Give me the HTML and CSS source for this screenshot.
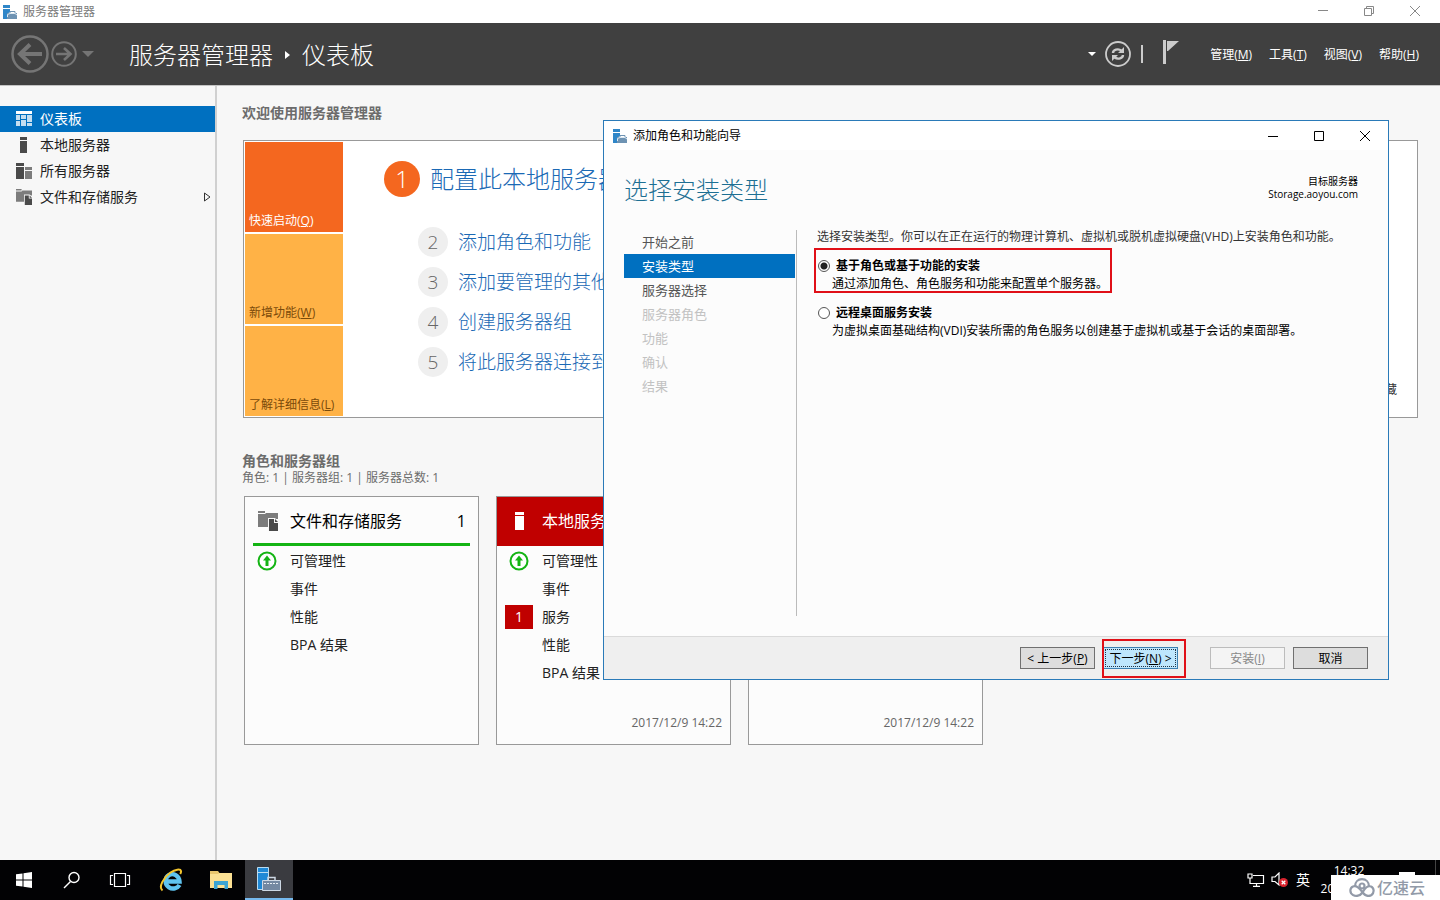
FILE: index.html
```html
<!DOCTYPE html>
<html lang="zh-CN">
<head>
<meta charset="utf-8">
<title>服务器管理器</title>
<link rel="stylesheet" href="styles.css">
</head>
<body>
<svg class="defs" aria-hidden="true">
  <symbol id="app" viewBox="0 0 14 14"><path fill="#2f86c8" d="M0 0h7v3H0zM0 4h7v3L4 9v5H0z"/><path fill="#6e93b3" d="M4 8h10v6H4z"/><path fill="none" stroke="#6e93b3" d="M7 8V6.500h5V8"/><path fill="none" stroke="#dbe8f2" d="M4.500 12V9.500L7 8.500h5l2 1.500"/></symbol>
  <symbol id="folder" viewBox="0 0 20 20"><path fill="#7c7c7c" d="M0 0h7v2H0zM0 3h7l1-1h12v6h-9v8H0z"/><path fill="#f7f7f7" d="M10 7h7l3 3v10H10z"/><path fill="#4a4a4a" d="M11 8h5v4h4v8h-9z"/><path fill="#4a4a4a" d="M17 8l3 3h-3z"/></symbol>
  <symbol id="up" viewBox="0 0 20 20"><circle cx="10" cy="10" r="8.500" fill="#fff" stroke="#14b414" stroke-width="2"/><path fill="#14b414" d="M10 4.500l4 5h-2.500V15h-3V9.500H6z"/></symbol>
</svg>

<header class="titlebar">
  <svg class="i14"><use href="#app"/></svg>
  <span class="titlebar-text">服务器管理器</span>
  <div class="winbtns gray">
    <button aria-label="最小化"><svg viewBox="0 0 12 12"><path d="M1 5.500h10"/></svg></button>
    <button aria-label="还原"><svg viewBox="0 0 12 12"><path d="M1.500 3.500h7v7h-7zM3.500 3V1.500h7v7H9"/></svg></button>
    <button aria-label="关闭"><svg viewBox="0 0 12 12"><path d="M1 1l10 10M11 1L1 11"/></svg></button>
  </div>
</header>

<div class="banner">
  <div class="history">
    <button aria-label="后退"><svg width="38" height="38" viewBox="0 0 38 38" fill="none" stroke="#757575"><circle cx="19" cy="19" r="17.500" stroke-width="2.500"/><path stroke-width="4" d="M31 19H10M19 9.500L9 19l10 9.500"/></svg></button>
    <button aria-label="前进"><svg width="26" height="26" viewBox="0 0 26 26" fill="none" stroke="#757575"><circle cx="13" cy="13" r="11.800" stroke-width="2"/><path stroke-width="2.600" d="M5 13h14M13 7l6.500 6L13 19"/></svg></button>
    <button aria-label="历史" class="hist-menu"><svg width="12" height="6" viewBox="0 0 12 6"><path fill="#757575" d="M0 0h12L6 6z"/></svg></button>
  </div>
  <h1 class="crumbs"><span>服务器管理器</span><svg width="5" height="8" viewBox="0 0 5 8"><path fill="#fff" d="M0 0l5 4-5 4z"/></svg><span>仪表板</span></h1>
  <div class="tools">
    <svg width="8" height="4" viewBox="0 0 8 4"><path fill="#fff" d="M0 0h8L4 4z"/></svg>
    <button aria-label="刷新" class="refresh"><svg width="26" height="26" viewBox="0 0 26 26" fill="none" stroke="#ccc"><circle cx="13" cy="13" r="12" stroke-width="1.800"/><path stroke-width="2.400" d="M8 12c0-3 5-5 8.500-2.300M18 14c0 3-5 5-8.500 2.300"/><path fill="#ccc" stroke="none" d="M19 6v6h-6zM7 20v-6h6z"/></svg></button>
    <span class="sep"></span>
    <button aria-label="通知" class="flag"><svg width="18" height="24" viewBox="0 0 18 24"><path fill="#ccc" d="M1 0h3v24H1zM5 1h12L6 11H5z"/></svg></button>
  </div>
  <nav class="menus">
    <button>管理(<u>M</u>)</button><button>工具(<u>T</u>)</button><button>视图(<u>V</u>)</button><button>帮助(<u>H</u>)</button>
  </nav>
</div>

<div class="workspace">
  <nav class="sidebar">
    <a href="#" class="active"><svg viewBox="0 0 16 16"><path fill="#fff" d="M0 0h16v3H0z"/><path fill="#c5def0" d="M0 4h4v5H0zM0 10h4v5H0zM5 4h5v4H5zM11 4h5v7h-5zM5 9h5v6H5zM11 12h5v3h-5z"/></svg>仪表板</a>
    <a href="#"><svg viewBox="0 0 16 16"><path fill="#4a4a4a" d="M4 0h7v3H4zM4 4h7v12H4z"/></svg>本地服务器</a>
    <a href="#"><svg viewBox="0 0 16 16"><path fill="#4a4a4a" d="M0 0h8v3H0zM0 4h8v12H0z"/><path fill="#7c7c7c" d="M9 4h7v3H9zM9 8h7v8H9z"/></svg>所有服务器</a>
    <a href="#"><svg viewBox="0 0 20 20"><use href="#folder"/></svg>文件和存储服务<svg class="more" viewBox="0 0 7 10"><path fill="none" stroke="#333" d="M.5 1l5.500 4-5.500 4z"/></svg></a>
  </nav>

  <main class="content">
    <h2>欢迎使用服务器管理器</h2>
    <section class="welcome">
      <div class="tabs">
        <button class="hot">快速启动(<u>Q</u>)</button>
        <button>新增功能(<u>W</u>)</button>
        <button>了解详细信息(<u>L</u>)</button>
      </div>
      <ol class="steps">
        <li class="first"><span class="num">1</span><a href="#">配置此本地服务器</a></li>
        <li><span class="num">2</span><a href="#">添加角色和功能</a></li>
        <li><span class="num">3</span><a href="#">添加要管理的其他</a></li>
        <li><span class="num">4</span><a href="#">创建服务器组</a></li>
        <li><span class="num">5</span><a href="#">将此服务器连接到</a></li>
      </ol>
      <button class="hide">隐藏</button>
    </section>

    <h2 class="groups-title">角色和服务器组</h2>
    <p class="summary">角色: 1 | 服务器组: 1 | 服务器总数: 1</p>
    <div class="tiles">
      <article class="tile">
        <header><svg class="i20"><use href="#folder"/></svg><span>文件和存储服务</span><b>1</b></header>
        <ul>
          <li><svg class="i20"><use href="#up"/></svg><span>可管理性</span></li>
          <li><span>事件</span></li>
          <li><span>性能</span></li>
          <li><span>BPA 结果</span></li>
        </ul>
      </article>
      <article class="tile alert">
        <header><svg class="i20" viewBox="0 0 20 20"><path fill="#fff" d="M5 1h9v3H5zM5 5h9v14H5z"/></svg><span>本地服务器</span><b>1</b></header>
        <ul>
          <li><svg class="i20"><use href="#up"/></svg><span>可管理性</span></li>
          <li><span>事件</span></li>
          <li><em>1</em><span>服务</span></li>
          <li><span>性能</span></li>
          <li><span>BPA 结果</span></li>
        </ul>
        <time>2017/12/9 14:22</time>
      </article>
      <article class="tile alert">
        <header><svg class="i20" viewBox="0 0 20 20"><path fill="#fff" d="M1 1h9v4H1zM1 6h9v13H1zM11 6h8v3h-8zM11 10h8v9h-8z"/></svg><span>所有服务器</span><b>1</b></header>
        <time>2017/12/9 14:22</time>
      </article>
    </div>
  </main>
</div>

<div class="dialog" role="dialog" aria-labelledby="dlg-title">
  <div class="dlg-title">
    <svg class="i14"><use href="#app"/></svg>
    <span id="dlg-title">添加角色和功能向导</span>
    <div class="winbtns">
      <button aria-label="最小化"><svg viewBox="0 0 12 12"><path d="M1 6.500h10"/></svg></button>
      <button aria-label="最大化"><svg viewBox="0 0 12 12"><path d="M1.500 1.500h9v9h-9z"/></svg></button>
      <button aria-label="关闭"><svg viewBox="0 0 12 12"><path d="M1 1l10 10M11 1L1 11"/></svg></button>
    </div>
  </div>
  <div class="dlg-head">
    <h2>选择安装类型</h2>
    <p>目标服务器<br>Storage.aoyou.com</p>
  </div>
  <div class="dlg-body">
    <nav class="wizard">
      <a href="#">开始之前</a>
      <a href="#" class="current">安装类型</a>
      <a href="#">服务器选择</a>
      <a class="off">服务器角色</a>
      <a class="off">功能</a>
      <a class="off">确认</a>
      <a class="off">结果</a>
    </nav>
    <div class="pane">
      <p>选择安装类型。你可以在正在运行的物理计算机、虚拟机或脱机虚拟硬盘(VHD)上安装角色和功能。</p>
      <div class="option marked">
        <label for="role-based"><input type="radio" id="role-based" name="type" checked>基于角色或基于功能的安装</label>
        <p>通过添加角色、角色服务和功能来配置单个服务器。</p>
      </div>
      <div class="option">
        <label for="rds"><input type="radio" id="rds" name="type">远程桌面服务安装</label>
        <p>为虚拟桌面基础结构(VDI)安装所需的角色服务以创建基于虚拟机或基于会话的桌面部署。</p>
      </div>
    </div>
  </div>
  <div class="dlg-foot">
    <button>&lt; 上一步(<u>P</u>)</button>
    <span class="next"><button>下一步(<u>N</u>) &gt;</button></span>
    <button class="install" disabled>安装(<u>I</u>)</button>
    <button>取消</button>
  </div>
</div>

<footer class="taskbar">
  <button aria-label="开始"><svg width="16" height="16" viewBox="0 0 16 16"><path fill="#fff" d="M0 2.300L6.500 1.400v6H0zM7.500 1.200L16 0v7.400H7.500zM0 8.400h6.500v6.200L0 13.700zM7.500 8.400H16V16l-8.500-1.200z"/></svg></button>
  <button aria-label="搜索"><svg width="18" height="18" viewBox="0 0 18 18" fill="none" stroke="#fff" stroke-width="1.400"><circle cx="11" cy="6.500" r="5"/><path d="M7.500 10.500L1 17"/></svg></button>
  <button aria-label="任务视图"><svg width="22" height="16" viewBox="0 0 22 16" fill="none" stroke="#fff" stroke-width="1.200"><path d="M5.500 1.500h11v13h-11zM4 3.500H1.500v9H4M18 3.500h2.500v9H18"/></svg></button>
  <button aria-label="浏览器" class="wide"><svg width="24" height="24" viewBox="0 0 24 24" fill="none"><path stroke="#5fc4f0" stroke-width="4.400" d="M20.500 17c-2 3.500-7 4.500-10.500 2.300C5.500 16.500 5.500 9.500 10 7c4.500-2.300 10 .5 10.500 6.500H8"/><path stroke="#f3c52e" stroke-width="2" d="M3.500 22.500C-1 19 5 9 11.500 4.500 16 1.500 21.500.500 22 3c.2 1-.2 2-.8 3"/></svg></button>
  <button aria-label="文件资源管理器" class="files"><svg width="22" height="18" viewBox="0 0 22 18"><path fill="#e9c66d" d="M0 0h8l1.500 2H21v4H0z"/><path fill="#fbe093" d="M0 3h8l1.500-1H22v15H0z"/><path fill="#3ba4d4" d="M4 10h14v8h-3.500v-4h-7v4H4z"/></svg></button>
  <button aria-label="服务器管理器" class="running"><svg width="26" height="26" viewBox="0 0 26 26"><path fill="#2089d6" stroke="#b9dcf3" d="M1.500 1.500h11v22h-11z"/><path stroke="#b9dcf3" d="M2 6.500h10"/><path fill="none" stroke="#cdd8e4" stroke-width="1.500" d="M12 14v-2.500h7V14"/><path fill="#7489a2" stroke="#cdd8e4" d="M6.500 14.500h18v10h-18z"/><path fill="none" stroke="#e6edf3" stroke-dasharray="2 1" d="M8 17.500h15"/></svg></button>
  <div class="tray">
    <svg width="18" height="14" viewBox="0 0 18 14" fill="none" stroke="#fff" stroke-width="1.200"><path d="M6 2.500h10.500v8H6M6 13.400h7M9.500 10.500v3M1 1h4v4H1zM3 5v5.500h3"/></svg>
    <svg width="18" height="16" viewBox="0 0 18 16"><path fill="none" stroke="#fff" stroke-width="1.200" d="M1 5h3l4-4v12L4 9.500H1z"/><circle cx="12.500" cy="10.500" r="4.500" fill="#d9232e"/><path stroke="#fff" stroke-width="1.300" d="M10.700 8.700l3.600 3.600M14.300 8.700l-3.600 3.600"/></svg>
    <span class="ime">英</span>
    <time class="clock">14:32<br>2017/12/9</time>
    <svg class="note" width="16" height="16" viewBox="0 0 16 16"><path fill="#fff" d="M0 0h16v12H8l-3 4v-4H0z"/></svg>
  </div>
  <div class="mark"><svg width="26" height="19" viewBox="0 0 26 19" fill="none" stroke="#929aa8" stroke-width="2.200"><path d="M6 8.500C6 4 9 1.200 13 1.200S20 4 20 8.500"/><path d="M13.500 14.500C11 18 7 18.500 4 17c-3.500-2-3.500-7 0-8.500 3-1.200 5.500.5 9 5 3.500 5 7 5 9.500 3.500 3-2.200 2.800-7-.5-8.500-3.500-1-5.500 1-8.500 6z"/><circle cx="13" cy="8" r="2.500"/></svg>亿速云</div>
</footer>
</body>
</html>
```
FILE: styles.css
```css
* { box-sizing: border-box; }
body {
  margin: 0;
  min-height: 100vh;
  display: flex;
  flex-direction: column;
  position: relative;
  background: #f7f7f7;
  color: #222;
  font: 12px/16px "Open Sans", "Noto Sans CJK SC", sans-serif;
}
h1, h2, p, ul, ol { margin: 0; padding: 0; font-weight: 400; list-style: none; }
button { padding: 0; border: 0; background: none; color: inherit; font: inherit; white-space: nowrap; }
a { color: inherit; text-decoration: none; }
svg { flex: none; }
u { text-underline-offset: 1px; }
.defs { position: absolute; width: 0; height: 0; }
.i14 { width: 14px; height: 14px; }
.i20 { width: 20px; height: 20px; }

.titlebar { display: flex; align-items: center; height: 23px; padding-left: 3px; gap: 6px; background: #fff; color: #7b7b7b; }
.winbtns { display: flex; margin-left: auto; }
.winbtns button { display: flex; align-items: center; justify-content: center; width: 46px; height: 20px; }
.winbtns svg { width: 12px; height: 12px; fill: none; stroke: #000; }
.winbtns.gray svg { stroke: #888; }
.titlebar .winbtns { padding: 0 2px 2px 0; }

.banner { display: flex; align-items: center; height: 62px; padding: 0 21px 0 11px; background: #404040; color: #fff; }
.history { display: flex; align-items: center; gap: 2px; width: 118px; }
.history button, .tools button { display: flex; }
.hist-menu { padding-left: 3px; }
.crumbs { display: flex; align-items: center; gap: 12px; padding-top: 1px; font-size: 24px; line-height: 32px; font-weight: 300; }
.tools { display: flex; align-items: center; margin-left: auto; }
.refresh { margin: 0 10px 0 9px; }
.sep { width: 2px; height: 18px; background: #ccc; }
.flag { margin: 0 30px 4px 19px; }
.menus { display: flex; gap: 17px; padding-top: 2px; }

.workspace { display: flex; flex: 1; border-top: 1px solid #c4c4c4; }
.sidebar { width: 217px; padding-top: 20px; border-right: 2px solid #d0d0d0; }
.sidebar a { display: flex; align-items: center; gap: 8px; height: 26px; padding: 0 4px 0 16px; font-size: 14px; }
.sidebar svg { width: 16px; height: 16px; }
.sidebar .more { width: 7px; height: 10px; margin-left: auto; }
.sidebar .active { background: #0070c0; color: #fff; }

.content { flex: 1; min-width: 0; padding: 17px 22px 0 25px; }
.content h2 { font-size: 14px; line-height: 20px; font-weight: 700; color: #6c6c6c; }
.welcome { display: flex; margin: 17px 0 0 1px; padding: 1px; border: 1px solid #999; background: #fff; }
.tabs { display: grid; gap: 2px; width: 98px; }
.tabs button { display: flex; align-items: flex-end; height: 90px; padding: 0 0 3px 4px; background: #ffb246; color: #7a4a0a; }
.tabs .hot { background: #f4671f; color: #fff; }
.steps { flex: 1; padding: 19px 0 0 75px; }
.steps li { display: flex; align-items: center; gap: 10px; height: 40px; font-size: 19px; line-height: 28px; font-weight: 300; color: #1a69b5; }
.num { display: grid; place-items: center; width: 30px; height: 30px; border-radius: 50%; background: #efefef; color: #666; }
.steps .first { height: 36px; margin: 0 0 25px -34px; font-size: 24px; }
.first .num { width: 36px; height: 36px; background: #f4671f; color: #fff; }
.hide { align-self: flex-end; margin: 0 19px 18px 0; color: #333; }
.content .groups-title { margin-top: 34px; line-height: 18px; }
.summary { color: #6c6c6c; }
.tiles { display: flex; flex-wrap: wrap; gap: 17px; margin: 10px 0 0 2px; }
.tile { display: flex; flex-direction: column; width: 235px; height: 249px; border: 1px solid #999; background: #fcfcfc; }
.tile header { display: flex; align-items: center; gap: 12px; height: 49px; margin: 0 8px; padding: 2px 4px 0 5px; border-bottom: 3px solid #14b414; color: #000; font-size: 16px; line-height: 24px; }
.tile b { margin-left: auto; font-weight: 400; }
.tile.alert header { margin: 0; padding: 2px 12px 0 13px; border-color: #c00000; background: #c00000; color: #fff; }
.tile ul { padding-top: 1px; }
.tile li { display: grid; grid-template-columns: 28px 1fr; column-gap: 9px; align-items: center; justify-items: center; height: 28px; padding-left: 8px; font-size: 14px; line-height: 20px; }
.tile li span { grid-column: 2; justify-self: start; }
.tile em { width: 28px; height: 24px; background: #c00000; color: #fff; font-style: normal; line-height: 24px; text-align: center; }
.tile time { margin: auto 8px 13px auto; color: #666; }

.dialog { position: absolute; top: 120px; left: 603px; right: 51px; min-height: 560px; display: flex; flex-direction: column; border: 1px solid #2a7ab8; background: #fcfcfc; color: #000; }
.dlg-title { display: flex; align-items: center; gap: 6px; height: 29px; padding-left: 9px; background: #fff; }
.dlg-head { display: flex; justify-content: space-between; padding: 24px 30px 0 20px; }
.dlg-head h2 { font-size: 24px; line-height: 32px; font-weight: 300; color: #1d6f93; }
.dlg-head p { padding-top: 1px; font-size: 10px; line-height: 13px; text-align: right; }
.dlg-body { display: flex; flex: 1; padding: 24px 20px 20px; }
.wizard { width: 173px; padding-right: 1px; border-right: 1px solid #bbb; }
.wizard a { display: block; height: 24px; padding-left: 18px; font-size: 13px; line-height: 24px; color: #555; }
.wizard .current { background: #0070c0; color: #fff; }
.wizard .off { color: #c2c2c2; }
.pane { flex: 1; padding-left: 17px; }
.pane > p { padding-left: 3px; color: #333; line-height: 14px; }
.option { padding: 7px 0 0 2px; height: 45px; border: 2px solid transparent; }
.marked { width: 298px; margin: 4px 0 2px; border-color: #e01018; }
.option label { display: flex; align-items: center; gap: 6px; font-weight: 700; line-height: 18px; }
.option p { padding-left: 14px; line-height: 17px; white-space: nowrap; }
.option input { appearance: none; width: 12px; height: 12px; margin: 0; border: 1px solid #555; border-radius: 50%; background: #fff; }
.option input:checked { background: radial-gradient(circle, #222 0 3px, #fff 4px); }
.dlg-foot { display: flex; justify-content: flex-end; gap: 8px; padding: 10px 20px; border-top: 1px solid #dadada; background: #efefef; }
.dlg-foot button { width: 75px; height: 22px; padding-top: 1px; border: 1px solid #707070; background: #dddddd; line-height: 19px; }
.next { position: relative; margin-right: 24px; }
.next::after { content: ""; position: absolute; inset: -8px -8px -9px -1px; border: 2px solid #e01018; }
.dlg-foot .next button { border-color: #3c7fb1; background: #bee6fd; outline: 1px dotted #234; outline-offset: -3px; }
.dlg-foot .install { border-color: #bcbcbc; background: #f4f4f4; color: #888; }

.taskbar { position: relative; display: flex; height: 40px; background: #020204; color: #fff; overflow: hidden; }
.taskbar button { display: grid; place-items: center; width: 48px; height: 40px; }
.taskbar .wide { width: 53px; }
.taskbar .running { background: #3a3b40; border-bottom: 2px solid #76b9ed; }
.tray { display: flex; align-items: center; gap: 6px; margin-left: auto; padding-right: 4px; }
.tray::after { content: ""; width: 1px; height: 40px; margin-left: 14px; background: #444; }
.ime { padding-left: 1px; font-size: 14px; }
.clock { width: 78px; margin: 0 5px 0 -6px; line-height: 18px; text-align: center; }
.note { margin-bottom: 0; }
.mark { position: absolute; right: 0; bottom: 0; display: flex; align-items: center; gap: 2px; width: 109px; height: 25px; padding-left: 18px; background: #fff; color: #929aa8; font-size: 16px; line-height: 24px; font-weight: 500; }
```
